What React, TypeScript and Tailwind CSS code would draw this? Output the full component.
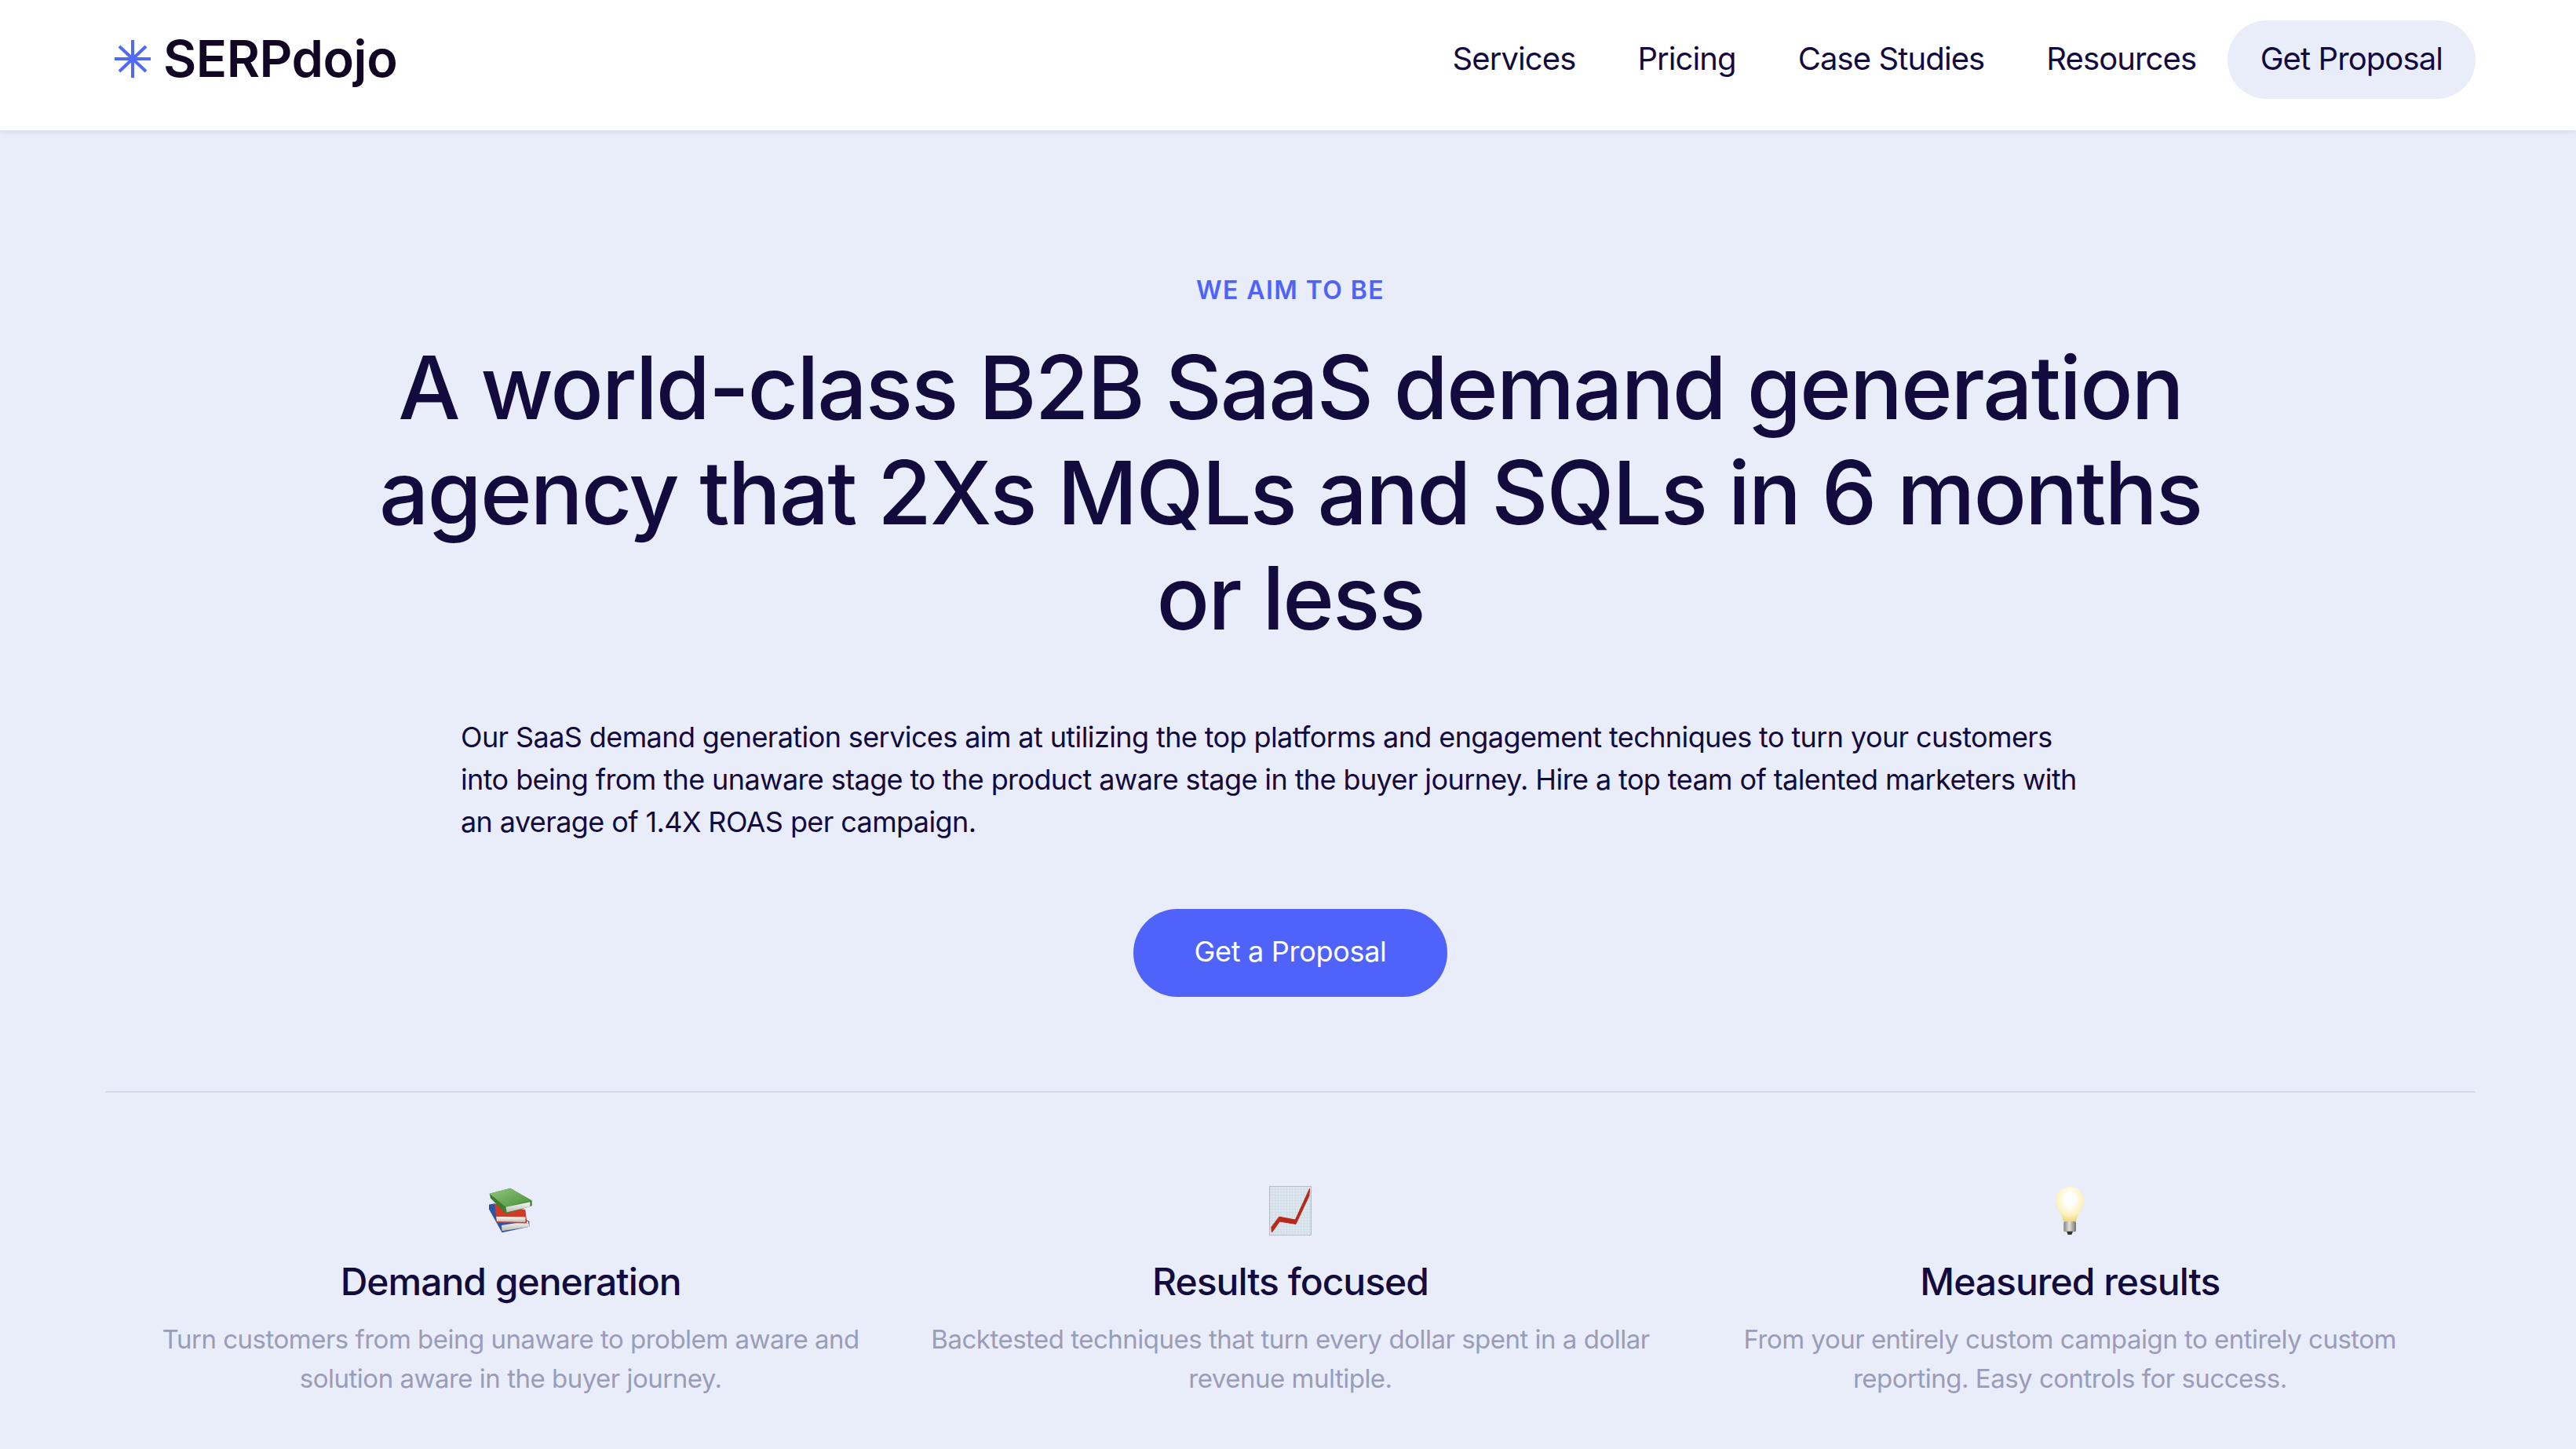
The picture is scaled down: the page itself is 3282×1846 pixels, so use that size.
const features = [
  {
    title: 'Demand generation',
    body: 'Turn customers from being unaware to problem aware and solution aware in the buyer journey.',
    icon: 'books',
  },
  {
    title: 'Results focused',
    body: 'Backtested techniques that turn every dollar spent in a dollar revenue multiple.',
    icon: 'chart',
  },
  {
    title: 'Measured results',
    body: 'From your entirely custom campaign to entirely custom reporting. Easy controls for success.',
    icon: 'bulb',
  },
];

const LogoMark = () => (
  <svg viewBox="0 0 46 48" className="w-[46px] h-[48px]" fill="none" stroke="#5069fb" strokeWidth="4">
    <path d="M23 0V48M0 24H46M6 8L40 40M40 8L6 40" />
  </svg>
);

const BooksIcon = () => (
  <svg viewBox="190 95 166 175" className="w-[55px] h-[58px]">
    <defs>
      <linearGradient id="bookGreen" x1="0" y1="0" x2="1" y2="1">
        <stop offset="0" stopColor="#94c57c" />
        <stop offset="1" stopColor="#459139" />
      </linearGradient>
      <linearGradient id="bookPages" x1="0" y1="0" x2="0" y2="1">
        <stop offset="0" stopColor="#f8f8f4" />
        <stop offset="1" stopColor="#bdbdb8" />
      </linearGradient>
    </defs>
    <path d="M190 160L212 156L345 225V245L240 268L190 178Z" fill="#2f54a6" />
    <path d="M238 240L340 224L345 245L240 262Z" fill="url(#bookPages)" />
    <path d="M212 158L330 180L336 232L220 230Z" fill="#d23a23" />
    <path d="M218 207L330 208V228L220 225Z" fill="url(#bookPages)" />
    <path d="M192 118L272 97L355 145V165L255 196L196 136Z" fill="#3c7f2f" />
    <path d="M192 118L272 97L355 145L255 170Z" fill="url(#bookGreen)" />
    <path d="M255 170L348 150V168L258 190Z" fill="url(#bookPages)" />
  </svg>
);

const ChartIcon = () => (
  <svg viewBox="200 92 162 190" className="w-[54px] h-[63px]">
    <defs>
      <pattern id="chartGrid" x="200" y="92" width="11" height="11" patternUnits="userSpaceOnUse">
        <rect width="11" height="11" fill="#dfe7ee" />
        <path d="M0 0H11M0 0V11" stroke="#b4cde2" strokeWidth="2" />
      </pattern>
    </defs>
    <rect x="200" y="92" width="162" height="190" fill="url(#chartGrid)" />
    <rect x="201" y="93" width="160" height="188" fill="none" stroke="#b3bec7" strokeWidth="4" />
    <path d="M208 250L238 210L300 222L355 102L353 130L302 238L240 228L210 270Z" fill="#b8291a" stroke="#b8291a" strokeWidth="3" strokeLinejoin="round" />
  </svg>
);

const BulbIcon = () => (
  <svg viewBox="237 95 108 183" className="w-[36px] h-[61px]">
    <defs>
      <radialGradient id="bulbGlow" cx="0.5" cy="0.36" r="0.62">
        <stop offset="0.25" stopColor="#ffffff" />
        <stop offset="0.75" stopColor="#fdf2bd" />
        <stop offset="1" stopColor="#f1d97f" />
      </radialGradient>
      <linearGradient id="bulbBase" x1="0" y1="0" x2="1" y2="0">
        <stop offset="0" stopColor="#85827c" />
        <stop offset="0.45" stopColor="#e4e1da" />
        <stop offset="1" stopColor="#77746f" />
      </linearGradient>
    </defs>
    <path d="M291 95C261 95 237 119 237 149C237 178 262 192 266 228H316C320 192 345 178 345 149C345 119 321 95 291 95Z" fill="url(#bulbGlow)" />
    <rect x="268" y="227" width="47" height="40" rx="5" fill="url(#bulbBase)" />
    <path d="M279 265H303L298 278H284Z" fill="#333333" />
  </svg>
);

const icons: Record<string, () => React.JSX.Element> = {
  books: BooksIcon,
  chart: ChartIcon,
  bulb: BulbIcon,
};

const navLinks = ['Services', 'Pricing', 'Case Studies', 'Resources'];

const App = () => {
  return (
    <div className="min-h-[1846px] h-[1846px] overflow-hidden bg-[#e9edf9] font-['Inter',sans-serif] text-[#130b3d]">
      <header className="h-[166px] bg-white flex items-center justify-between pl-[146px] pr-[128px] pb-[14px] shadow-[0_2px_8px_rgba(19,11,61,0.08)]">
        <div className="flex items-center gap-[16px] mb-[3px]">
          <LogoMark />
          <span className="text-[65px] font-semibold tracking-[-0.5px] text-[#130524] leading-none">SERPdojo</span>
        </div>
        <nav className="flex items-center text-[40px] leading-none tracking-[-0.9px]">
          {navLinks.map((link) => (
            <a key={link} className="px-[39.5px] pb-[2px]">
              {link}
            </a>
          ))}
          <a className="h-[100px] px-[42px] pb-[2px] flex items-center bg-[#e9edf9] rounded-[50px]">Get Proposal</a>
        </nav>
      </header>

      <main className="px-[134px] pr-[128px]">
        <section className="flex flex-col items-center pt-[184px] pb-[120px] border-b-2 border-[#d3d8ea]">
          <p className="text-[32px] leading-[40px] font-semibold tracking-[1.4px] text-[#4f63fa]">WE AIM TO BE</p>
          <h1 className="mt-[36px] w-[2400px] text-center text-[112px] leading-[134px] font-medium tracking-[-2.1px]">
            A world-class B2B SaaS demand generation agency that 2Xs MQLs and SQLs in 6 months or less
          </h1>
          <p className="mt-[84px] w-[2114px] pr-[24px] text-[36px] leading-[54px] tracking-[-0.6px] text-[#130b3d]">
            Our SaaS demand generation services aim at utilizing the top platforms and engagement techniques to turn your customers into being from the unaware stage to the product aware stage in the buyer journey. Hire a top team of talented marketers with an average of 1.4X ROAS per campaign.
          </p>
          <a className="mt-[84px] w-[400px] h-[112px] pb-[5px] flex items-center justify-center rounded-[56px] bg-[#4f63fa] text-white text-[36px] tracking-[-0.3px]">
            Get a Proposal
          </a>
        </section>

        <section className="grid grid-cols-3 px-[20px] pt-[118px]">
          {features.map((f) => {
            const Icon = icons[f.icon];
            return (
              <div key={f.title} className="flex flex-col items-center text-center px-[30px]">
                <div className="h-[64px] flex items-center justify-center">
                  <Icon />
                </div>
                <h3 className="mt-[27px] text-[48px] leading-[64px] font-medium tracking-[-1px]">{f.title}</h3>
                <p className="mt-[16px] text-[33px] leading-[50px] tracking-[-0.5px] text-[#9a9cb8]">{f.body}</p>
              </div>
            );
          })}
        </section>
      </main>
    </div>
  );
};

export default App;
